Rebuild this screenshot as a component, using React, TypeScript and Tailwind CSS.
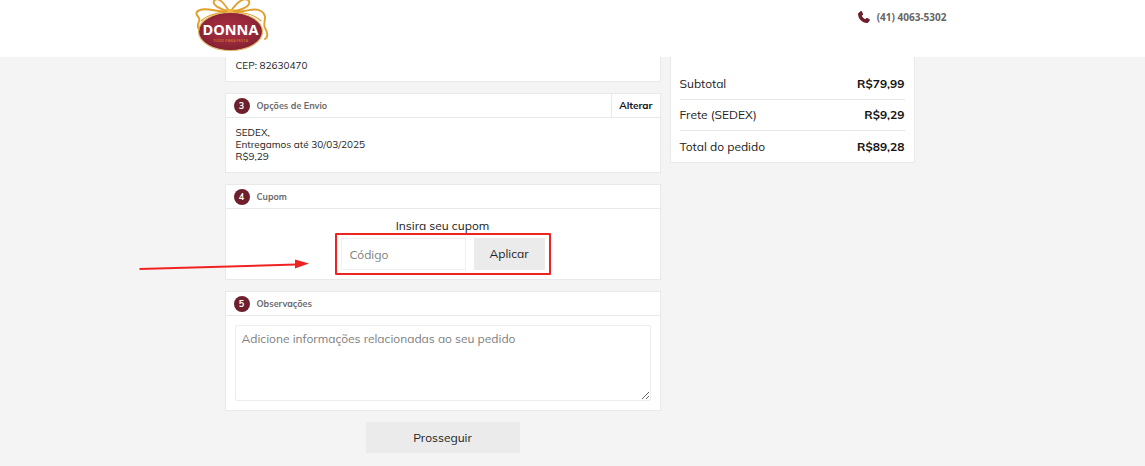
import type { ReactNode } from "react";

function Logo() {
  return (
    <svg width="76" height="52" viewBox="0 0 76 52" role="img" aria-label="Donna" className="shrink-0">
      <defs>
        <radialGradient id="seal" cx="50%" cy="45%" r="60%">
          <stop offset="0" stopColor="#a92f42" />
          <stop offset="0.6" stopColor="#96283a" />
          <stop offset="1" stopColor="#7a1f31" />
        </radialGradient>
      </defs>
      <ellipse cx="35.500" cy="31.500" rx="32" ry="19" fill="url(#seal)" stroke="#e3b765" strokeWidth="1.200" />
      <g fill="none" stroke="#e0a02c" strokeWidth="1.900" strokeLinecap="round">
        <path d="M34 11 C26 10 17 5 19 1 C23 -4 29 3 34 11" />
        <path d="M36 11 C42 2 50 -4 54 1 C56 6 46 11 36 11" />
        <path d="M32 11 C23 13 13 7 5 10 C-1 12 2 16 4 18 C6 22 0 25 4 29" />
        <path d="M38 11 C49 14 58 6 66 11 C74 16 67 23 70 28 C73 33 73 37 70 39" />
        <path d="M31 12 C19 13 11 16 6 21" strokeWidth="1.100" />
        <path d="M41 12 C54 13 61 16 66 21" strokeWidth="1.100" />
      </g>
      <ellipse cx="35" cy="11" rx="3" ry="2" fill="#efb742" />
      <text x="35.500" y="35" textAnchor="middle" fontFamily="Open Sans, sans-serif" fontWeight="700" fontSize="14.500" fill="#fff">
        DONNA
      </text>
      <text x="35.500" y="42" textAnchor="middle" fontFamily="Open Sans, sans-serif" fontWeight="600" fontSize="4" fill="#c9762f">
        TUDO PARA FESTA
      </text>
    </svg>
  );
}

function PhoneIcon() {
  return (
    <svg width="12" height="12" viewBox="0 0 24 24" fill="#6d1f2c" aria-hidden="true">
      <path d="M1 4 L5 0.500 C6 0 7 0 7.700 1 L10 5.500 C10.500 6.500 10.200 7.300 9.500 8 L7.500 9.700 C9 12.800 11.200 15 14.300 16.500 L16.300 14.500 C17 13.800 17.800 13.600 18.700 14 L23 16.300 C24 17 24 18 23.500 18.900 L20.300 23 C19.700 23.800 19 24 18 24 C8 23.500 0.500 16 0 6 C0 5.200 0.300 4.600 1 4 Z" />
    </svg>
  );
}

function Step({ number, title, action, children }: { number: number; title: string; action?: ReactNode; children: ReactNode }) {
  return (
    <section className="border border-[#e9e9e9] bg-white">
      <header className="flex h-6 items-center border-b border-[#e9e9e9] pl-2">
        <span className="flex size-4 items-center justify-center rounded-full bg-[#6d1f2c] text-[9px] font-bold text-white">{number}</span>
        <h2 className="ml-[7px] flex-1 text-[9px] font-bold text-[#6b6b6b]">{title}</h2>
        {action}
      </header>
      <div className="p-[9px]">{children}</div>
    </section>
  );
}

function CouponArrow() {
  return (
    <svg width="170" height="12" viewBox="0 0 170 12" className="pointer-events-none absolute top-5 right-full mr-8" aria-hidden="true">
      <path d="M0.500 11 L157 6.500" stroke="#f02323" strokeWidth="2" />
      <path d="M156 1.500 L170 5.500 L156 10.500 Z" fill="#f02323" />
    </svg>
  );
}

const totals = [
  { label: "Subtotal", value: "R$79,99" },
  { label: "Frete (SEDEX)", value: "R$9,29" },
  { label: "Total do pedido", value: "R$89,28" },
];

export default function App() {
  return (
    <div className="min-h-screen bg-[#f4f4f4] font-['Mulish','Lato',sans-serif] text-[#222]">
      <header className="bg-white pr-1">
        <div className="mx-auto flex h-[57px] max-w-[752px] items-start justify-between">
          <a href="#inicio">
            <Logo />
          </a>
          <a href="tel:+554140635302" className="mt-[11px] flex items-center gap-[7px] font-['Open_Sans',sans-serif] text-[10px] leading-3 font-bold text-[#666]">
            <PhoneIcon />
            (41) 4063-5302
          </a>
        </div>
      </header>

      <main className="pr-1.5">
        <div className="mx-auto flex max-w-[690px] flex-wrap items-start gap-[9px]">
          <div className="flex min-w-0 flex-1 flex-col gap-[11px]">
            <section className="border border-t-0 border-[#e9e9e9] bg-white px-[10px] pt-[3px] pb-[9px] text-[10px] leading-3">CEP: 82630470</section>

            <Step
              number={3}
              title="Opções de Envio"
              action={
                <button type="button" className="h-full border-l border-[#e9e9e9] px-[7px] text-[10px] font-bold text-[#111]">
                  Alterar
                </button>
              }
            >
              <p className="px-px text-[10px] leading-3">
                SEDEX,
                <br />
                Entregamos até 30/03/2025
                <br />
                R$9,29
              </p>
            </Step>

            <Step number={4} title="Cupom">
              <form className="flex flex-col items-center gap-1" onSubmit={(e) => e.preventDefault()}>
                <label htmlFor="cupom" className="text-[12px] leading-4">
                  Insira seu cupom
                </label>
                <div className="relative flex gap-2">
                  <input id="cupom" type="text" placeholder="Código" className="h-8 w-[125px] border border-[#f0f0f0] bg-white px-2 text-[12px] outline-none placeholder:text-[#808080]" />
                  <button type="submit" className="h-8 w-[71px] bg-[#ebebeb] text-[12px]">
                    Aplicar
                  </button>
                  <span className="pointer-events-none absolute -inset-x-[6px] -inset-y-[5px] rounded-[1px] border-2 border-[#f02323]" />
                  <CouponArrow />
                </div>
              </form>
            </Step>

            <Step number={5} title="Observações">
              <textarea
                aria-label="Observações"
                placeholder="Adicione informações relacionadas ao seu pedido"
                className="block h-[76px] w-full resize rounded-[2px] border border-[#ededed] bg-white px-[6px] py-[5px] text-[12px] leading-4 outline-none placeholder:text-[#808080]"
              />
            </Step>

            <button type="button" className="h-[31px] w-[154px] self-center bg-[#ebebeb] text-[12px]">
              Prosseguir
            </button>
          </div>

          <aside className="w-[245px] border border-t-0 border-[#e9e9e9] bg-white px-[9px] pt-3">
            <dl className="divide-y divide-[#e6e6e6] text-[12px]">
              {totals.map((row) => (
                <div key={row.label} className="flex h-[31px] items-center justify-between">
                  <dt>{row.label}</dt>
                  <dd className="font-bold text-[#111]">{row.value}</dd>
                </div>
              ))}
            </dl>
          </aside>
        </div>
      </main>
    </div>
  );
}
